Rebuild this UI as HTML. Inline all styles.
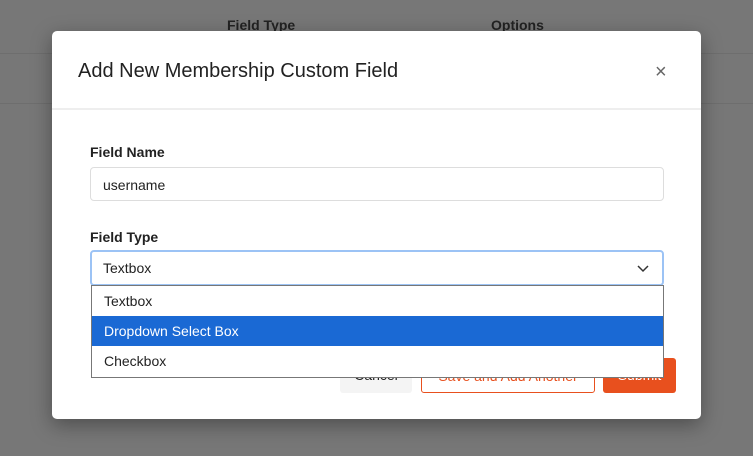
<!DOCTYPE html>
<html><head><style>
*{box-sizing:border-box;margin:0;padding:0}
body{width:753px;height:456px;background:#777;font-family:"Liberation Sans",sans-serif;position:relative;overflow:hidden}
.bg{position:absolute;font-size:14px;font-weight:bold;color:#222;top:17px}
.line{position:absolute;left:0;right:0;height:1px;background:#6e6e6e}
.modal{position:absolute;left:52px;top:31px;width:649px;height:388px;background:#fff;border-radius:5px;box-shadow:0 6px 20px rgba(0,0,0,.35)}
.title{position:absolute;left:26px;top:29px;font-size:20px;color:#222}
.x{position:absolute;left:603px;top:30px;font-size:20px;color:#666;font-weight:300}
.hr{position:absolute;left:0;right:0;top:77px;height:2px;background:#eee}
.lbl{position:absolute;left:38px;font-size:14px;font-weight:bold;color:#222}
.inp{position:absolute;left:38px;width:574px;height:34px;border:1px solid #ddd;border-radius:4px;font-size:14px;color:#222;padding:9px 12px}
.sel{border:2px solid #9cc3f5;padding:8px 11px}
.btn{position:absolute;top:327px;height:35px;border-radius:3px;font-size:14px;text-align:center;line-height:35px}
.dd{position:absolute;left:91px;top:285px;width:573px;height:93px;border:1px solid #777;background:#fff;font-size:14px;color:#222}
.dd div{height:30px;line-height:30px;padding-left:12px}
</style></head><body>
<div class="bg" style="left:227px">Field Type</div>
<div class="bg" style="left:491px">Options</div>
<div class="line" style="top:53px"></div>
<div class="line" style="top:103px"></div>
<div class="modal">
<div class="title">Add New Membership Custom Field</div>
<div class="x">×</div>
<div class="hr"></div>
<div class="lbl" style="top:113px">Field Name</div>
<div class="inp" style="top:136px">username</div>
<div class="lbl" style="top:198px">Field Type</div>
<div class="inp sel" style="top:219px;height:36px">Textbox
<svg style="position:absolute;right:13px;top:13px" width="12" height="8" viewBox="0 0 12 8"><path d="M1 1l5 5 5-5" fill="none" stroke="#333" stroke-width="1.5"/></svg></div>
<div class="btn" style="left:288px;width:72px;background:#f4f4f4;color:#222">Cancel</div>
<div class="btn" style="left:369px;width:174px;border:1px solid #e8501e;color:#e8501e">Save and Add Another</div>
<div class="btn" style="left:551px;width:73px;background:#e8501e;color:#fff">Submit</div>
</div>
<div class="dd"><div>Textbox</div><div style="background:#1a69d4;color:#fff">Dropdown Select Box</div><div>Checkbox</div></div>
</body></html>
